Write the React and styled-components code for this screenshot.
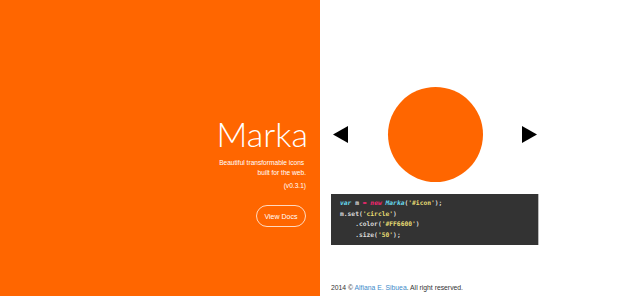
import React from 'react';
import styled, { createGlobalStyle } from 'styled-components';

const GlobalStyle = createGlobalStyle`
  html, body {
    margin: 0;
    padding: 0;
    background: #fff;
  }
  body {
    font-family: "Liberation Sans", Arial, sans-serif;
  }
`;

const Page = styled.div`
  display: flex;
  width: 640px;
  height: 296px;
  overflow: hidden;
`;

const Hero = styled.section`
  width: 50%;
  height: 100%;
  background: #ff6600;
  display: flex;
  flex-direction: column;
  align-items: flex-end;
  padding: 117px 14px 0 0;
  box-sizing: border-box;
  color: #fff;
  text-align: right;
`;

const Title = styled.h1`
  margin: 0 -2px 0 0;
  font-family: Lato, "Open Sans", sans-serif;
  font-weight: 300;
  font-size: 34px;
  line-height: 34px;
`;

const Tagline = styled.p`
  margin: ${({ $top }) => $top}px 0 0;
  font-size: 6.6px;
  line-height: 10px;
`;

const DocsButton = styled.a`
  display: flex;
  align-items: center;
  justify-content: center;
  margin-top: 14px;
  width: 50px;
  height: 22px;
  box-sizing: border-box;
  border: 1px solid rgba(255, 255, 255, 0.75);
  border-radius: 11px;
  font-size: 7px;
  color: #fff;
  text-decoration: none;
`;

const Demo = styled.section`
  width: 50%;
  height: 100%;
  display: flex;
  flex-direction: column;
  padding: 87px 0 0 11px;
  box-sizing: border-box;
`;

const Stage = styled.div`
  width: 208px;
  display: flex;
  align-items: center;
  justify-content: space-between;
  padding: 0 2px;
  box-sizing: border-box;
`;

const Arrow = styled.button`
  display: flex;
  padding: 0;
  border: 0;
  background: none;
  cursor: pointer;
`;

const Circle = styled.div`
  width: 95px;
  height: 95px;
  border-radius: 50%;
  background: #ff6600;
`;

const Code = styled.pre`
  margin: 12px 0 0;
  width: 208px;
  height: 51px;
  box-sizing: border-box;
  padding: 4px 9px;
  background: #333;
  border-right: 1px solid #bbb;
  color: #dcdcdc;
  font-family: "DejaVu Sans Mono", "Liberation Mono", monospace;
  font-size: 6.3px;
  line-height: 10.7px;
  font-weight: bold;
`;

const Tok = styled.span`
  color: ${({ $c }) => $c};
  font-style: ${({ $i }) => ($i ? 'italic' : 'normal')};
`;

const Footer = styled.footer`
  margin-top: 38px;
  font-size: 6.8px;
  line-height: 10px;
  color: #333;
`;

const FooterLink = styled.a`
  color: #428bca;
  text-decoration: none;
`;

const blue = '#66d9ef';
const pink = '#f92672';
const yellow = '#e6db74';

export default function App() {
  return (
    <Page>
      <GlobalStyle />
      <Hero>
        <Title>Marka</Title>
        <Tagline $top={7}>
          Beautiful transformable icons&nbsp;
          <br />
          built for the web.
        </Tagline>
        <Tagline $top={3}>(v0.3.1)</Tagline>
        <DocsButton href="#">View Docs</DocsButton>
      </Hero>
      <Demo>
        <Stage>
          <Arrow aria-label="previous">
            <svg width="15" height="17" viewBox="0 0 15 17">
              <polygon points="15,0 15,17 0,8.5" fill="#000" />
            </svg>
          </Arrow>
          <Circle />
          <Arrow aria-label="next">
            <svg width="15" height="17" viewBox="0 0 15 17">
              <polygon points="0,0 0,17 15,8.5" fill="#000" />
            </svg>
          </Arrow>
        </Stage>
        <Code>
          <Tok $c={blue} $i>var</Tok> m <Tok $c={pink}>=</Tok> <Tok $c={pink} $i>new</Tok>{' '}
          <Tok $c={blue} $i>Marka</Tok>(<Tok $c={yellow}>'#icon'</Tok>);
          {'\n'}m.set(<Tok $c={yellow}>'circle'</Tok>)
          {'\n'}    .color(<Tok $c={yellow}>'#FF6600'</Tok>)
          {'\n'}    .size(<Tok $c={yellow}>'50'</Tok>);
        </Code>
        <Footer>
          2014 © <FooterLink href="#">Alfiana E. Sibuea</FooterLink>. All right reserved.
        </Footer>
      </Demo>
    </Page>
  );
}
